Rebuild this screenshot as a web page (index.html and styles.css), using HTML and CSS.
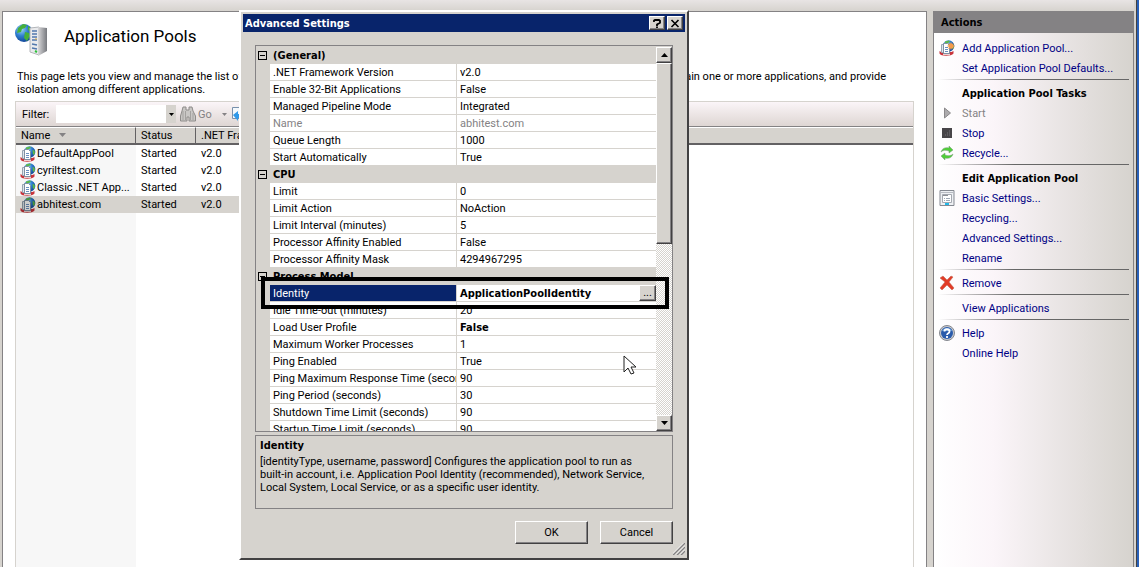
FILE: index.html
```html
<!DOCTYPE html>
<html lang="en">
<head>
<meta charset="utf-8">
<title>Application Pools</title>
<link rel="stylesheet" href="styles.css">
</head>
<body>
<svg class="defs" aria-hidden="true">
  <defs>
    <radialGradient id="globe" cx=".35" cy=".3" r=".8"><stop offset="0" stop-color="#9fd8f8"/><stop offset=".45" stop-color="#2f7fd0"/><stop offset="1" stop-color="#0c3a8c"/></radialGradient>
    <linearGradient id="steel"><stop offset="0" stop-color="#d8d8da"/><stop offset="1" stop-color="#77797e"/></linearGradient>
    <symbol id="pool" viewBox="0 0 16 16">
      <circle cx="9.500" cy="6" r="5.800" fill="url(#globe)"/>
      <path d="M6 1.500l4-1 1 1-2 1.500-3 .5zM12.500 4l2 .5.500 3-2 1.500z" fill="#5cb84a"/>
      <path d="M.5 11v2.500c1 3 12 3 14 0V11l-2 1H2z" fill="#c8353c"/>
      <path d="M4 14.500h7" stroke="#f0d0d0"/>
      <path d="M2.500 4.500h6v8h-6z" fill="#dfe6ee" stroke="#98a5b2"/>
      <path d="M4.500 3.500h4l2 2v8h-6z" fill="#fff" stroke="#7f90a2"/>
      <path d="M6 7.500h3M6 9.500h3M6 11.500h3" stroke="#6a90c0"/>
    </symbol>
  </defs>
</svg>
<div class="window">
  <main class="page">
    <header class="page-head">
      <svg class="page-icon" viewBox="0 0 34 34" aria-hidden="true">
        <circle cx="9" cy="10" r="9" fill="url(#globe)"/>
        <path d="M3 5l5-4 4 1-2 3-3 1-1 3-4 1zM10 9l4 1 1 3-3 5-3-3zM13 3l4 3-1 3-3-2z" fill="#46b03a"/>
        <path d="M15 5l9-1v28l-9-3z" fill="#e9eaec" stroke="#b4b6ba"/>
        <path d="M23 4l9 1v23l-9 5z" fill="url(#steel)"/>
        <path d="M17 8l5 0M17 11l5 0M17 14l5 0M17 17l5 0M17 21l5 1M17 25l5 1" stroke="#5278ad" stroke-width="1.500"/>
        <path d="M20 28l2 1" stroke="#2cc038" stroke-width="2"/><path d="M20 16h2" stroke="#d9a437" stroke-width="1"/>
      </svg>
      <h1>Application Pools</h1>
    </header>
    <div class="intro">
      <p class="intro-line"><span>This page lets you view and manage the list of application pools on the server.</span><span>Application pools contain one or more applications, and provide</span></p>
      <p>isolation among different applications.</p>
    </div>
    <section class="list">
      <div class="toolbar">
        <label for="filter">Filter:</label>
        <input id="filter" type="text">
        <button class="drop" aria-label="Filter history"><svg viewBox="0 0 5 3"><path d="M0 0h5L2.500 3z"/></svg></button>
        <button class="go" disabled>
          <svg viewBox="0 0 16 16"><path d="M3 1h3v3h3V1h3l1 4 2.500 5v5H9v-4H7v4H.5v-5L2 5z" fill="#c9c7c5" stroke="#8e8c8a"/><path d="M3 5v9M5.500 5v9M10.500 5v9M13 7v7" stroke="#a3a19f"/></svg>
          Go <svg class="tiny" viewBox="0 0 5 3"><path d="M0 0h5L2.500 3z" fill="#848284"/></svg></button>
        <button class="show" aria-label="Show all"><svg viewBox="0 0 16 16"><path d="M1.500 1.500h11v8l-3 3h-8z" fill="#f4f8fc" stroke="#7890ac"/><path d="M2 9l5-4v3h6v4H7v3z" fill="#3198e8"/></svg></button>
      </div>
      <div class="table-wrap">
        <table class="pools">
          <colgroup><col class="c-name"><col class="c-status"><col class="c-net"><col></colgroup>
          <thead><tr><th>Name <svg viewBox="0 0 7 4"><path d="M0 0h7L3.500 4z" fill="#848284"/></svg></th><th>Status</th><th>.NET Fra...</th><th></th></tr></thead>
          <tbody>
            <tr><td><svg><use href="#pool"/></svg>DefaultAppPool</td><td>Started</td><td>v2.0</td></tr>
            <tr><td><svg><use href="#pool"/></svg>cyriltest.com</td><td>Started</td><td>v2.0</td></tr>
            <tr><td><svg><use href="#pool"/></svg>Classic .NET App...</td><td>Started</td><td>v2.0</td></tr>
            <tr class="selected"><td><svg><use href="#pool"/></svg>abhitest.com</td><td>Started</td><td>v2.0</td></tr>
          </tbody>
        </table>
      </div>
    </section>
  </main>

  <aside class="actions">
    <h2>Actions</h2>
    <ul>
      <li><svg viewBox="0 0 16 16"><use href="#pool"/><path d="M12 2l1 2 2-1-1 2 2 1-2 1 1 2-2-1-1 2-1-2-2 1 1-2-2-1 2-1-1-2 2 1z" fill="#f59a4a"/></svg><a href="#">Add Application Pool...</a></li>
      <li><a href="#">Set Application Pool Defaults...</a></li>
      <li class="rule"></li>
      <li><h3>Application Pool Tasks</h3></li>
      <li><svg viewBox="0 0 16 16"><path d="M5.500 3l6 5-6 5z" fill="#adabad" stroke="#8b898b"/></svg><span class="off">Start</span></li>
      <li><svg viewBox="0 0 16 16"><path d="M3 3h10v10H3z" fill="#484649"/><path d="M6 10h5M8 8h3M10 6h1" stroke="#77757a" stroke-dasharray="1 1"/></svg><a href="#">Stop</a></li>
      <li><svg viewBox="0 0 16 16"><path d="M2 7c1-4 5-5 8-4V1l4 4-4 3V6C7 5 4 5 2 7zM14 9c-1 4-5 5-8 4v2l-4-4 4-3v2c3 1 6 1 8-1z" fill="#4fcf38" stroke="#79977a" stroke-width=".5"/></svg><a href="#">Recycle...</a></li>
      <li class="rule"></li>
      <li><h3>Edit Application Pool</h3></li>
      <li><svg viewBox="0 0 16 16"><path d="M1 .5h14v15H1z" fill="#eef0f3" stroke="#858991"/><path d="M1 2.500h14" stroke="#b8bbc2"/><path d="M3.500 4.500h9v8h-9z" fill="#fff" stroke="#a5a9b1"/><path d="M4 5h5v1H4z" fill="#8d9096"/><path d="M5 8.500h1M5 10.500h1M7 8.500h4M7 10.500h4" stroke="#9fa9b5"/><path d="M6 14h4" stroke="#20b8e8" stroke-width="2"/></svg><a href="#">Basic Settings...</a></li>
      <li><a href="#">Recycling...</a></li>
      <li><a href="#">Advanced Settings...</a></li>
      <li><a href="#">Rename</a></li>
      <li class="rule"></li>
      <li><svg viewBox="0 0 16 16"><path d="M1 3l3-2 4 4 4-4 2 1-4 5 5 6-2 2-5-5-5 5-2-2 5-6z" fill="#e23b26" stroke="#b9604f" stroke-width=".5"/></svg><a href="#">Remove</a></li>
      <li class="rule"></li>
      <li><a href="#">View Applications</a></li>
      <li class="rule"></li>
      <li><svg viewBox="0 0 16 16"><circle cx="8" cy="8" r="7.500" fill="#c9cbd0" stroke="#85888f"/><circle cx="8" cy="8" r="6" fill="#2a5bab"/><path d="M3 6a5.500 5 0 0 1 10 0z" fill="#6fa3dc"/><path d="M5.500 6.500c0-3 5-3 5 0 0 2-2.500 1.500-2.500 3.500M8 11v2" fill="none" stroke="#fff" stroke-width="1.800"/></svg><a href="#">Help</a></li>
      <li><a href="#">Online Help</a></li>
    </ul>
  </aside>
  <div class="edge"></div>
</div>

<div class="dialog" role="dialog" aria-labelledby="dlg-title">
  <div class="titlebar">
    <h2 id="dlg-title">Advanced Settings</h2>
    <button class="cap" aria-label="Help"><svg viewBox="0 0 8 9"><path d="M1 3V1.500L2 1h4l1 .7v2L4 5.500V7M4 7.500V9" fill="none" stroke="#000" stroke-width="1.800"/></svg></button>
    <button class="cap" aria-label="Close"><svg viewBox="0 0 8 9"><path d="M.5 1l7 7M7.500 1l-7 7" stroke="#000" stroke-width="1.600"/></svg></button>
  </div>
  <div class="dialog-body">
    <div class="grid">
      <div class="grid-view">
        <table class="props">
          <colgroup><col class="c-gutter"><col class="c-prop"><col></colgroup>
          <tbody>
            <tr class="cat"><td><i></i></td><th colspan="2">(General)</th></tr>
            <tr><td></td><td>.NET Framework Version</td><td>v2.0</td></tr>
            <tr><td></td><td>Enable 32-Bit Applications</td><td>False</td></tr>
            <tr><td></td><td>Managed Pipeline Mode</td><td>Integrated</td></tr>
            <tr class="off"><td></td><td>Name</td><td>abhitest.com</td></tr>
            <tr><td></td><td>Queue Length</td><td>1000</td></tr>
            <tr><td></td><td>Start Automatically</td><td>True</td></tr>
            <tr class="cat"><td><i></i></td><th colspan="2">CPU</th></tr>
            <tr><td></td><td>Limit</td><td>0</td></tr>
            <tr><td></td><td>Limit Action</td><td>NoAction</td></tr>
            <tr><td></td><td>Limit Interval (minutes)</td><td>5</td></tr>
            <tr><td></td><td>Processor Affinity Enabled</td><td>False</td></tr>
            <tr><td></td><td>Processor Affinity Mask</td><td>4294967295</td></tr>
            <tr class="cat"><td><i></i></td><th colspan="2">Process Model</th></tr>
            <tr class="current"><td></td><td>Identity</td><td><div class="cell"><b>ApplicationPoolIdentity</b><button aria-label="Edit identity">...</button></div></td></tr>
            <tr><td></td><td>Idle Time-out (minutes)</td><td>20</td></tr>
            <tr><td></td><td>Load User Profile</td><td><b>False</b></td></tr>
            <tr><td></td><td>Maximum Worker Processes</td><td>1</td></tr>
            <tr><td></td><td>Ping Enabled</td><td>True</td></tr>
            <tr><td></td><td>Ping Maximum Response Time (seconds)</td><td>90</td></tr>
            <tr><td></td><td>Ping Period (seconds)</td><td>30</td></tr>
            <tr><td></td><td>Shutdown Time Limit (seconds)</td><td>90</td></tr>
            <tr><td></td><td>Startup Time Limit (seconds)</td><td>90</td></tr>
          </tbody>
        </table>
      </div>
      <div class="scroll">
        <button aria-label="Scroll up"><svg viewBox="0 0 7 4"><path d="M0 4h7L3.500 0z"/></svg></button>
        <div class="thumb"></div>
        <button class="down" aria-label="Scroll down"><svg viewBox="0 0 7 4"><path d="M0 0h7L3.500 4z"/></svg></button>
      </div>
    </div>
    <div class="help">
      <h3>Identity</h3>
      <p>[identityType, username, password] Configures the application pool to run as<br>built-in account, i.e. Application Pool Identity (recommended), Network Service,<br>Local System, Local Service, or as a specific user identity.</p>
    </div>
    <div class="buttons"><button>OK</button><button>Cancel</button></div>
  </div>
  <svg class="grip" viewBox="0 0 12 12"><path d="M0 12L12 0M4 12l8-8M8 12l4-4" stroke="#848284" stroke-width="1.500"/><path d="M-1 11.500L11.500-1M3 11.500L12 2.500M7 11.500l5-5" stroke="#fff" stroke-width=".8"/></svg>
  <div class="marker"></div>
  <svg class="cursor" viewBox="0 0 13 20"><path d="M1 1v16l4-4 3 6 3-1-3-6h5z" fill="#fff" stroke="#222"/></svg>
</div>
</body>
</html>
```
FILE: styles.css
```css
* { box-sizing: border-box; }
body, h1, h2, h3, p, ul { margin: 0; padding: 0; }
body {
  height: 100vh;
  overflow: hidden;
  position: relative;
  background: #d6d3ce;
  color: #000;
  font: 11px/13px Roboto, "Liberation Sans", sans-serif;
}
button, input { font: inherit; color: inherit; margin: 0; padding: 0; border: 0; border-radius: 0; }
h2, h3, b, .cat th { font: bold 11px/13px "DejaVu Sans Condensed", sans-serif; }
svg { display: block; flex: none; overflow: visible; }
.defs { position: absolute; width: 0; height: 0; }

.window {
  display: flex;
  height: 100vh;
  padding: 11px 0 0 2px;
  background: linear-gradient(#e8e4e4, #d6d3ce 11px);
}
.page {
  flex: 1;
  min-width: 0;
  display: flex;
  flex-direction: column;
  margin-right: 6px;
  padding: 0 12px;
  background: #fff;
  border: solid #848284;
  border-width: 1px 1px 0;
}
.page-head { display: flex; align-items: center; gap: 15px; height: 49px; padding-top: 6px; }
.page-icon { width: 34px; height: 34px; }
h1 { font: 17px/20px Roboto, sans-serif; padding-bottom: 8px; }
.intro { padding: 9px 28px 0 2px; }
.intro-line { display: flex; justify-content: space-between; white-space: nowrap; }

.list { flex: 1; display: flex; flex-direction: column; margin-top: 5px; border: solid #d6d3ce; border-width: 1px 1px 0; }
.toolbar { display: flex; align-items: center; height: 25px; padding-left: 6px; background: linear-gradient(#fbf5f8, #ded6d3); border-bottom: 1px solid #848284; }
.toolbar input { width: 110px; height: 18px; margin-left: 7px; background: #fff; }
.toolbar label { width: 27px; white-space: nowrap; }
.toolbar button { background: none; }
.toolbar .drop { display: grid; place-items: center; width: 10px; height: 18px; background: #d6d3ce; }
.drop svg, .tiny { width: 5px; height: 3px; }
.toolbar .go { display: flex; align-items: center; gap: 2px; margin-left: 4px; color: #848284; }
.go svg { width: 16px; height: 16px; }
.go .tiny { width: 5px; height: 3px; margin-left: 8px; }
.show { margin-left: 4px; }
.show svg { width: 16px; height: 16px; }
.table-wrap { flex: 1; background: linear-gradient(#f7f7f7, #f7f7f7) 0 0 / 120px 100% no-repeat; }
table { width: 100%; table-layout: fixed; border-collapse: separate; border-spacing: 0; }
.pools th { height: 18px; padding: 0 5px; text-align: left; font-weight: normal; background: #d6d3ce; border-top: 1px solid #fff; border-bottom: 2px solid #636163; white-space: nowrap; }
.pools th:nth-child(-n+2) { border-right: 1px solid #636163; }
.pools th svg { display: inline-block; width: 7px; height: 4px; margin: 0 0 2px 6px; }
.pools .c-name { width: 120px; }
.pools .c-status { width: 60px; }
.pools .c-net { width: 90px; }
.pools td { height: 17px; padding: 0 5px; white-space: nowrap; }
.pools td:first-child { display: flex; align-items: center; gap: 1px; padding-right: 0; padding-left: 4px; }
.pools td svg { width: 16px; height: 16px; }
.selected td { background: #d6d3ce; }
.selected svg { filter: brightness(.8); }

.actions {
  width: 201px;
  border: solid #848284;
  border-width: 0 1px;
  background: linear-gradient(90deg, #fff, #fbf5f9 30%, #d6d3ce);
}
.actions h2 { height: 22px; padding: 5px 7px 0; background: #848284; }
.actions ul { list-style: none; padding: 5px 4px 0; }
.actions li { display: flex; align-items: center; height: 20px; padding-left: 24px; white-space: nowrap; }
.actions li:has(> svg) { gap: 7px; padding-left: 1px; }
.actions li > svg { width: 16px; height: 16px; }
.actions .rule { align-items: flex-start; height: 5px; padding: 1px 0 0; }
.actions .rule::before { content: ""; flex: 1; height: 1px; background: linear-gradient(90deg, transparent, #666 40%); }
.actions a { color: #000084; text-decoration: none; }
.off { color: #848284; }
.edge { width: 5px; margin-top: -11px; border-right: 2px solid #2860b8; background: linear-gradient(90deg, #d6d3ce 2px, #424142 2px); }

.dialog {
  position: absolute;
  left: 239px;
  top: 10px;
  width: 450px;
  background: #d6d3ce;
  border: 2px solid;
  border-color: #fff #424142 #424142 #fff;
  padding: 2px 2px 14px;
}
.titlebar { display: flex; align-items: center; gap: 2px; height: 18px; padding: 0 2px; background: #08246b; color: #fff; }
.titlebar h2 { flex: 1; }
.cap, .scroll button, .cell button, .buttons button {
  display: grid;
  place-items: center;
  background: #d6d3ce;
  border: solid;
  border-width: 1px;
  border-color: #fff #424142 #424142 #fff;
  box-shadow: inset -1px -1px #848284;
}
.cap { width: 16px; height: 14px; }
.cap svg { width: 8px; height: 9px; }
.dialog-body { padding: 13px 12px 0; }
.grid { display: flex; height: 387px; border: 1px solid #848284; padding-top: 1px; }
.grid-view { flex: 1; min-width: 0; overflow: hidden; }
.props .c-gutter { width: 14px; }
.props .c-prop { width: 187px; }
.props td, .props th { height: 17px; padding: 0 3px; text-align: left; white-space: nowrap; overflow: hidden; }
.props td:not(:first-child) { background: #fff; border-bottom: 1px solid #d6d3ce; }
.props td:nth-child(2) { border-right: 1px solid #d6d3ce; }
.props .cat td { padding: 0 2px; }
.cat i { display: block; width: 9px; height: 9px; border: 1px solid #000; background: linear-gradient(#000, #000) center / 5px 1px no-repeat; }
.props .current td:nth-child(2) { background: #08246b; color: #fff; }
.props .current td:last-child { padding-right: 0; }
.cell { display: flex; justify-content: space-between; align-items: center; }
.cell button { width: 17px; height: 16px; line-height: 8px; }
.scroll { display: flex; flex-direction: column; width: 16px; background: repeating-conic-gradient(#fff 0 25%, #d6d3ce 0 50%) 0 0 / 2px 2px; }
.scroll button { height: 16px; }
.scroll svg { width: 7px; height: 4px; }
.thumb { height: 181px; background: #d6d3ce; border: 1px solid; border-color: #fff #424142 #424142 #fff; box-shadow: inset -1px -1px #848284; }
.scroll .down { margin-top: auto; }
.help { height: 74px; margin-top: 3px; padding: 3px 4px; border: 1px solid #848284; white-space: nowrap; }
.help h3 { margin-bottom: 3px; }
.buttons { display: flex; justify-content: flex-end; gap: 12px; margin-top: 12px; }
.buttons button { width: 73px; height: 23px; }
.grip { position: absolute; right: 2px; bottom: 3px; width: 12px; height: 12px; overflow: hidden; }
.marker { position: absolute; left: 20px; top: 265px; width: 408px; height: 32px; border: 4px solid #000; }
.cursor { position: absolute; left: 382px; top: 343px; width: 13px; height: 20px; }
```
